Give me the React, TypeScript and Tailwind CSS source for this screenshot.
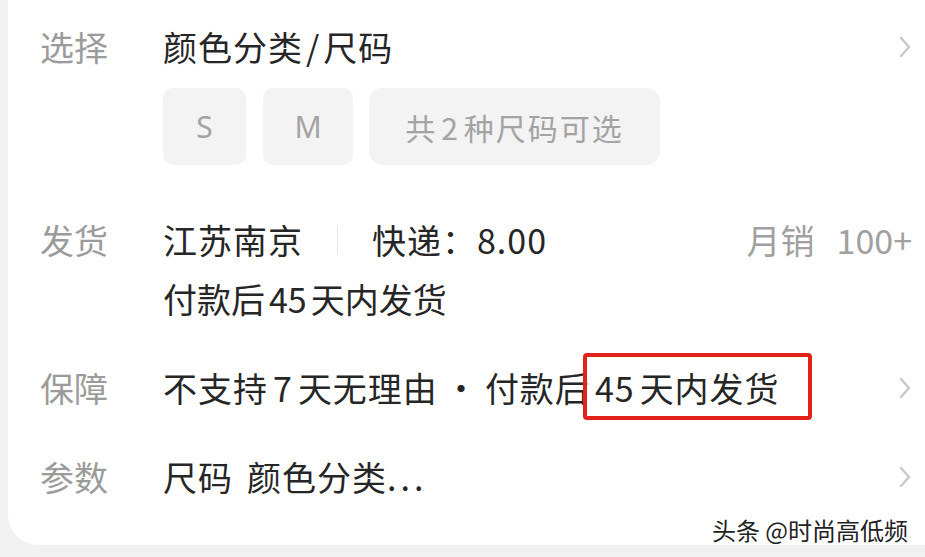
import React from "react";

const Chevron: React.FC = () => (
  <svg width="14" height="22" viewBox="0 0 14 22" className="shrink-0">
    <polyline
      points="3,2 11,11 3,20"
      fill="none"
      stroke="#c8c8c8"
      strokeWidth="2.4"
      strokeLinecap="round"
      strokeLinejoin="round"
    />
  </svg>
);

const Label: React.FC<{ text: string }> = ({ text }) => (
  <div className="w-[123px] shrink-0 text-[#9b9b9b]">{text}</div>
);

// iOS-like spacing between CJK and latin/digit runs
const Spaced: React.FC<{ text: string; gap?: string }> = ({ text, gap = "mx-[5px]" }) => (
  <>
    {text.split(/([0-9A-Za-z/]+)/).map((part, i) =>
      /^[0-9A-Za-z/]+$/.test(part) ? (
        <span key={i} className={gap}>
          {part}
        </span>
      ) : (
        <React.Fragment key={i}>{part}</React.Fragment>
      ),
    )}
  </>
);

const App: React.FC = () => {
  return (
    <div
      className="w-[925px] h-[557px] bg-[#f1f1f1] pl-[8px] overflow-hidden"
      style={{ fontFamily: '"Noto Sans CJK SC", "Noto Sans", sans-serif' }}
    >
      <div className="relative h-[545px] bg-white rounded-bl-[30px] pl-[32px] pr-[13px] text-[34px] leading-[48px] text-[#262626]">
        {/* 选择 */}
        <div className="pt-[23px] flex items-center">
          <Label text="选择" />
          <div className="flex-1 tracking-[1px]">
            <Spaced text="颜色分类/尺码" gap="mx-[3px]" />
          </div>
          <Chevron />
        </div>
        <div className="ml-[123px] mt-[17px] flex text-[30px] text-[#a3a3a3]">
          <div
            className="h-[77px] w-[83px] rounded-[10px] bg-[#f3f3f3] flex items-center justify-center"
            style={{ fontFamily: '"Noto Sans", sans-serif' }}
          >
            S
          </div>
          <div
            className="ml-[17px] h-[77px] w-[90px] rounded-[10px] bg-[#f3f3f3] flex items-center justify-center"
            style={{ fontFamily: '"Noto Sans", sans-serif' }}
          >
            M
          </div>
          <div className="ml-[16px] h-[77px] w-[291px] rounded-[14px] bg-[#f3f3f3] flex items-center justify-center tracking-[2px]">
            <span>
              <Spaced text="共2种尺码可选" gap="mx-[4px]" />
            </span>
          </div>
        </div>

        {/* 发货 */}
        <div className="mt-[51px] flex items-center">
          <Label text="发货" />
          <div className="tracking-[1px]">江苏南京</div>
          <div className="mx-[34px] h-[30px] w-px bg-[#e6e6e6]" />
          <div className="flex-1 tracking-[1px]">快递：8.00</div>
          <div className="text-[#a0a0a0] flex gap-[22px]">
            <span>月销</span>
            <span>100+</span>
          </div>
        </div>
        <div className="ml-[123px] mt-[11px]">
          <Spaced text="付款后45天内发货" gap="mx-[4px]" />
        </div>

        {/* 保障 */}
        <div className="relative mt-[41px] flex items-center">
          <Label text="保障" />
          <div className="flex-1 tracking-[1px]">
            <Spaced text="不支持7天无理由" />
            <span className="mx-[6px]">·</span>
            <Spaced text="付款后45天内发货" />
          </div>
          <Chevron />
          {/* red annotation box */}
          <div className="absolute left-[543px] top-[-11px] w-[229px] h-[67px] border-[4px] border-[#e2231c] rounded-[4px]" />
        </div>

        {/* 参数 */}
        <div className="mt-[41px] flex items-center">
          <Label text="参数" />
          <div className="flex-1 tracking-[1px]">
            尺码<span className="ml-[14px]">颜色分类</span>
            <span className="tracking-[4px]">...</span>
          </div>
          <Chevron />
        </div>

        {/* watermark */}
        <div
          className="absolute right-[17px] bottom-[0px] text-[24px] leading-[30px] text-[#222]"
          style={{ textShadow: "0 0 2px #fff, 0 0 2px #fff" }}
        >
          头条 @时尚高低频
        </div>
      </div>
    </div>
  );
};

export default App;
